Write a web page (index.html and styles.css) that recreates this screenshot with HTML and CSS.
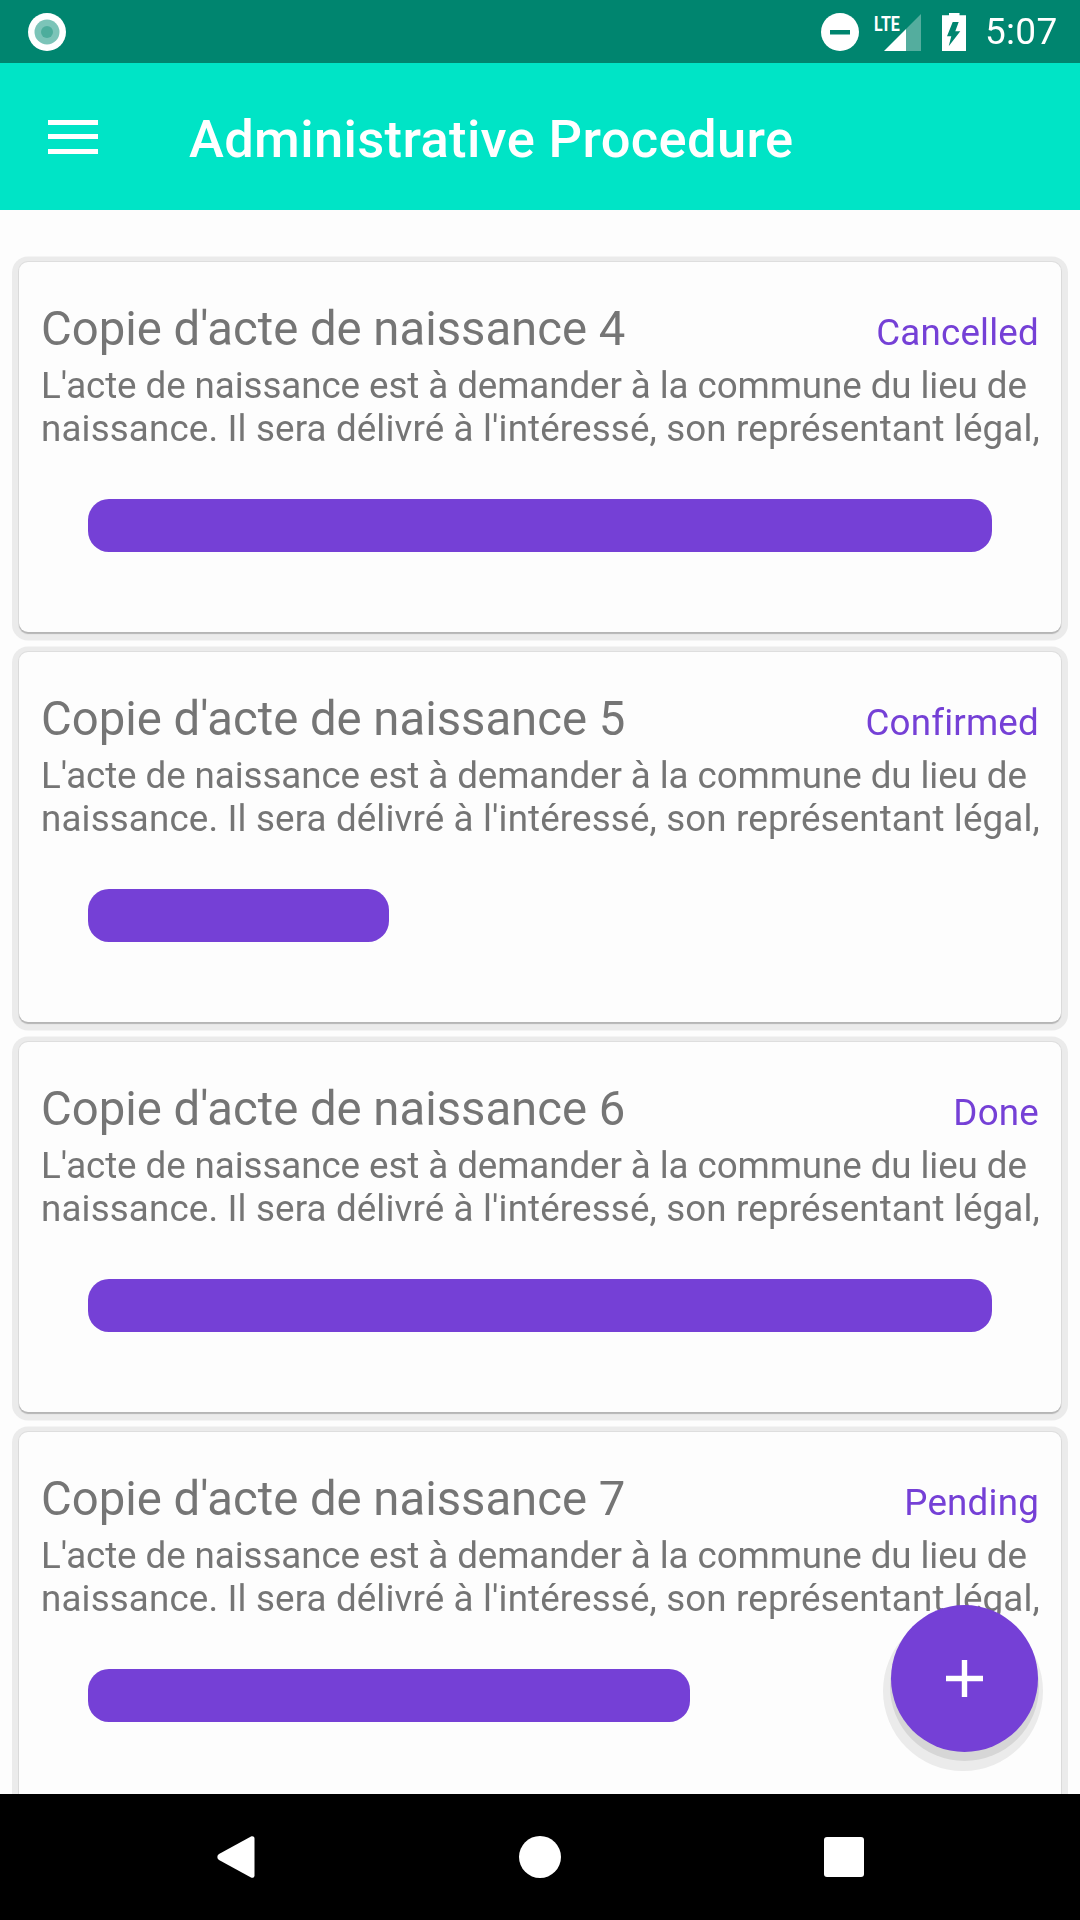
FILE: index.html
```html
<!DOCTYPE html>
<html lang="en">
<head>
<meta charset="utf-8">
<title>Administrative Procedure</title>
<link rel="stylesheet" href="styles.css">
</head>
<body>
<div class="app">
  <div class="status">
    <svg class="ic-left" width="38" height="38" viewBox="0 0 38 38"><circle cx="19" cy="19" r="19" fill="#fff"/><circle cx="19" cy="19" r="12.5" fill="#7cc4b8"/><circle cx="19" cy="19" r="6" fill="#4dad9c"/></svg>
    <div class="status-right">
      <svg class="ic-dnd" width="38" height="38" viewBox="0 0 38 38"><circle cx="19" cy="19" r="19" fill="#fff"/><rect x="9" y="17" width="20" height="4.5" fill="#00856f"/></svg>
      <div class="net">
        <span class="lte">LTE</span>
        <svg class="signal" width="37" height="37" viewBox="0 0 37 37"><path d="M37 0V37H22V15z" fill="#fff" fill-opacity=".33"/><path d="M22 15V37H0z" fill="#fff"/></svg>
      </div>
      <svg class="ic-batt" width="24" height="38" viewBox="0 0 24 38"><path d="M7 0h10.500v2.300H24V38H0V2.300h7z" fill="#fff"/><path d="M10.700 9h6l-3.400 9.300h5L6.700 33.300l2.600-10H5z" fill="#00856f"/></svg>
      <span class="time">5:07</span>
    </div>
  </div>
  <header class="toolbar">
    <div class="burger"><i></i><i></i><i></i></div>
    <h1 class="title">Administrative Procedure</h1>
  </header>
  <main class="list">
    <article class="card">
      <div class="card-head"><h2 class="card-title">Copie d'acte de naissance 4</h2><span class="state">Cancelled</span></div>
      <p class="desc">L'acte de naissance est à demander à la commune du lieu de naissance. Il sera délivré à l'intéressé, son représentant légal,</p>
      <div class="track"><div class="bar" style="width:100%"></div></div>
    </article>
    <article class="card">
      <div class="card-head"><h2 class="card-title">Copie d'acte de naissance 5</h2><span class="state">Confirmed</span></div>
      <p class="desc">L'acte de naissance est à demander à la commune du lieu de naissance. Il sera délivré à l'intéressé, son représentant légal,</p>
      <div class="track"><div class="bar" style="width:33.3%"></div></div>
    </article>
    <article class="card">
      <div class="card-head"><h2 class="card-title">Copie d'acte de naissance 6</h2><span class="state">Done</span></div>
      <p class="desc">L'acte de naissance est à demander à la commune du lieu de naissance. Il sera délivré à l'intéressé, son représentant légal,</p>
      <div class="track"><div class="bar" style="width:100%"></div></div>
    </article>
    <article class="card">
      <div class="card-head"><h2 class="card-title">Copie d'acte de naissance 7</h2><span class="state">Pending</span></div>
      <p class="desc">L'acte de naissance est à demander à la commune du lieu de naissance. Il sera délivré à l'intéressé, son représentant légal,</p>
      <div class="track"><div class="bar" style="width:66.6%"></div></div>
    </article>
  </main>
  <div class="fab"><svg width="37" height="37" viewBox="0 0 37 37"><path d="M15.800 0h5.400v15.800H37v5.400H21.200V37h-5.400V21.200H0v-5.400h15.800z" fill="#fff"/></svg></div>
  <nav class="navbar">
    <svg width="38" height="42" viewBox="0 0 38 42"><path d="M34 .5 2 18a3.500 3.500 0 0 0 0 6l32 17.500c1.500.8 3.500 0 3.500-2V2.500c0-2-2-2.800-3.500-2z" fill="#fff"/></svg>
    <div class="nav-home"></div>
    <div class="nav-recent"></div>
  </nav>
</div>
</body>
</html>
```
FILE: styles.css
```css
* { box-sizing: border-box; }
html, body { margin: 0; padding: 0; }
body { width: 1080px; height: 1920px; overflow: hidden; background: #fdfdfd; font-family: Roboto, sans-serif; }
.app { position: relative; width: 1080px; height: 1920px; display: flex; flex-direction: column; }

.status { height: 63px; flex: none; background: #00856f; display: flex; align-items: center; justify-content: space-between; padding: 1px 22px 0 28px; }
.status svg { display: block; }
.status-right { display: flex; align-items: center; }
.ic-dnd { margin-right: 16px; }
.net { position: relative; width: 46px; height: 38px; margin-right: 21px; }
.lte { position: absolute; left: -1px; top: 1px; font-size: 20px; line-height: 20px; font-weight: 700; color: #fff; transform: scaleX(.8); transform-origin: left top; }
.signal { position: absolute; right: 0; bottom: 0; }
.ic-batt { margin-right: 19px; }
.time { font-size: 37px; line-height: 38px; letter-spacing: .3px; color: #fff; will-change: transform; }

.toolbar { height: 147px; flex: none; background: #00e4c6; display: flex; align-items: center; padding-left: 48px; }
.burger { width: 50px; height: 34px; display: flex; flex-direction: column; justify-content: space-between; margin-right: 91px; }
.burger i { display: block; height: 5px; background: #fff; }
.title { margin: 0; padding-top: 4px; font-size: 52.5px; line-height: 60px; letter-spacing: .35px; font-weight: 500; color: #fff; will-change: transform; }

.list { flex: 1; min-height: 0; overflow: hidden; padding: 52px 19px 0; display: flex; flex-direction: column; gap: 20px; will-change: transform; }
.card { flex: none; height: 370px; background: #fdfdfd; border-radius: 9px; box-shadow: 0 2px 1px #b5b5b5, 0 0 0 1px #dedede, 0 1.500px 0 7px #ebebeb; padding: 39px 14px 0 22px; }
.card-head { display: flex; justify-content: space-between; align-items: baseline; height: 63px; }
.card-title { margin: 0; font-size: 47.25px; line-height: 56px; font-weight: 400; color: #757575; white-space: nowrap; }
.state { margin-right: 8px; font-size: 36.75px; line-height: 44px; letter-spacing: .2px; color: #7540d6; white-space: nowrap; }
.desc { margin: 0; font-size: 36.75px; line-height: 43px; letter-spacing: .135px; color: #757575; }
.desc::first-line { letter-spacing: -.09px; }
.track { margin: 49px 55px 0 47px; height: 53px; }
.bar { height: 53px; border-radius: 21px; background: #7540d6; }

.fab { position: absolute; left: 891px; top: 1605px; width: 147px; height: 147px; border-radius: 50%; background: #7540d6; display: flex; align-items: center; justify-content: center; box-shadow: 0 8px 0 1px #d6d6d6, -1.500px 12.500px 0 6.500px #ebebeb; }
.fab svg { display: block; }

.navbar { position: relative; height: 126px; flex: none; background: #000; display: grid; grid-template-columns: 38px 42px 40px; justify-content: space-between; align-items: center; padding: 0 216px; }
.navbar svg { display: block; margin-left: 1px; }
.nav-home { width: 42px; height: 42px; margin-left: 1px; border-radius: 50%; background: #fff; }
.nav-recent { width: 40px; height: 40px; border-radius: 3px; background: #fff; }
```
